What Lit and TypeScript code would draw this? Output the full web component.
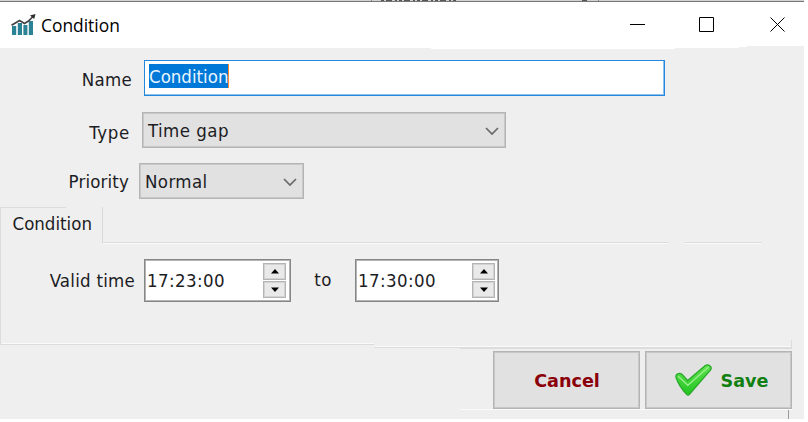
import { LitElement, html, css, svg } from "lit";
import { customElement, property } from "lit/decorators.js";

@customElement("drop-down")
class DropDown extends LitElement {
  @property() value = "";
  static styles = css`
    :host { display: flex; box-sizing: border-box; align-items: center; justify-content: space-between;
      border: 1px solid #b4b4b4; box-shadow: inset 0 0 0 1px #c8c8c8; background: #e1e1e1; padding: 2px 5px 0; height: 36px; }
    svg { width: 16px; height: 10px; display: block; }
  `;
  render() {
    return html`<span>${this.value}</span>
      <svg viewBox="0 0 16 10"><path d="M2 2l6 6 6-6" fill="none" stroke="#6a6a6a" stroke-width="1.7"/></svg>`;
  }
}

@customElement("time-spinner")
class TimeSpinner extends LitElement {
  @property() value = "";
  static styles = css`
    :host { display: flex; box-sizing: border-box; align-items: center; justify-content: space-between;
      border: 1px solid #858785; box-shadow: inset 0 0 0 1px #b4b4b4; background: #fff; padding: 0 4px 0 2px; height: 43px; letter-spacing: .4px; }
    .buttons { display: flex; flex-direction: column; gap: 1px; }
    .step { box-sizing: border-box; width: 23px; height: 17px; border: 1.5px solid #b4b4b4; background: #e9e9e9;
      box-shadow: inset 0 0 0 1px #d2d2d2; display: flex; align-items: center; justify-content: center; }
    svg { width: 8px; height: 5px; display: block; }
  `;
  render() {
    return html`<span>${this.value}</span>
      <div class="buttons">
        <div class="step"><svg viewBox="0 0 8 5"><path d="M0 4.5L4 0l4 4.5z"/></svg></div>
        <div class="step"><svg viewBox="0 0 8 5"><path d="M0 .5L4 5 8 .5z"/></svg></div>
      </div>`;
  }
}

const logo = svg`
  <g fill="#2a8294"><rect x="1" y="12" width="4.2" height="9"/><rect x="6.800" y="9" width="4.200" height="12"/>
  <rect x="12.400" y="11" width="4" height="10"/><rect x="17.800" y="7" width="4.200" height="14"/></g>
  <path d="M.5 11.300L3.500 9.500 8.500 6.500 13.500 9.500 17.500 7 22 2.500" fill="none" stroke="#454545" stroke-width="1.7"/>
  <path d="M19 1.500L24.500 0l-1.300 5z" fill="#2c2c2c"/>`;

@customElement("app-root")
class AppRoot extends LitElement {
  static styles = css`
    :host { display: block; width: 808px; height: 422px; background: #fff; overflow: hidden;
      font: 18.5px/22px "DejaVu Sans Condensed", "DejaVu Sans", sans-serif; font-stretch: condensed; color: #1c1c24; letter-spacing: .3px; }
    .window { width: 804px; height: 419px; display: flex; flex-direction: column; background: #efefef; position: relative; }
    .behind { height: 1px; background: #d2d2d2; border-bottom: 1px solid #777; flex: none; overflow: hidden; display: flex; }
    .fragments { width: 804px; height: 1px; display: block; }
    .title { height: 47px; margin-bottom: -1px; box-sizing: border-box; padding-bottom: 1px; background: #fff; display: flex; align-items: center; flex: none; color: #000;
      clip-path: polygon(0 0, 804px 0, 804px 44px, 747px 44px, 747px 45px, 739px 45px, 739px 46px, 675px 46px, 675px 47px, 431px 47px, 431px 46px, 0 46px); z-index: 1; }
    .logo { width: 25px; height: 22px; margin: 0 0 0 11px; }
    .title-text { font: 17.4px/24px "Open Sans", "Noto Sans", sans-serif; letter-spacing: 0; margin-left: 5px; flex: 1; font-stretch: normal; }
    .controls { width: 176px; height: 46px; display: block; }
    .row { display: flex; flex: none; }
    .label { text-align: right; flex: none; }
    .name-row { margin-top: 12px; height: 36px; }
    .name-row .label { width: 132px; margin: 9px 12px 0 0; }
    .input { box-sizing: border-box; width: 521px; height: 36px; border: 1px solid #2488dc; box-shadow: inset -1px -1px #8cc0ee; background: #fff; padding: 3px 4px; }
    .selected { display: inline-block; background: #0078d7; color: #eaf5ff; height: 24px; line-height: 25px; border-right: 1px solid #ff8728; letter-spacing: 0; }
    .type-row { margin-top: 16px; }
    .type-row .label { width: 130px; margin: 10px 12px 0 0; letter-spacing: .7px; }
    .type-row drop-down { width: 364px; letter-spacing: .45px; }
    .priority-row { margin-top: 15px; }
    .priority-row .label { width: 129px; margin: 8px 10px 0 0; letter-spacing: .15px; }
    .priority-row drop-down { width: 165px; letter-spacing: .4px; }
    .tabs { display: flex; height: 36px; margin-top: 8px; flex: none; }
    .tab { box-sizing: border-box; width: 103px; padding: 6px 0 0 11.5px; letter-spacing: 0; border-left: 1px solid #dcdcdc; border-right: 1px solid #d9d9d9;
      background: linear-gradient(#dcdcdc, #dcdcdc) 0 0 / 65px 1px no-repeat; }
    .rule { box-sizing: border-box; border-bottom: 1px solid #dcdcdc; width: 565px; margin-right: 17px; box-shadow: 0 1px #fafafa; }
    .rule.short { width: 77px; }
    .panel { display: flex; height: 102px; flex: none; box-sizing: border-box; border-left: 1px solid #dcdcdc; padding-top: 16px; }
    .panel .label { width: 134px; margin: 11px 9px 0 0; letter-spacing: .25px; }
    .panel .to { width: 64px; margin: 10px 0 0; text-align: center; }
    .start { width: 147px; }
    .end { width: 144px; padding-right: 3px; }
    .edges { position: absolute; left: 0; top: 339px; width: 804px; height: 80px; }
    .actions { display: flex; gap: 5px; margin: 6px 0 0 493px; position: relative; }
    .button { box-sizing: border-box; width: 147px; height: 58px; border: 1.5px solid #b4b4b4; box-shadow: inset 0 0 0 1px #c8c8c8; background: #e1e1e1;
      display: flex; align-items: center; justify-content: center; font: bold 17.6px/22px "DejaVu Sans", sans-serif; letter-spacing: 0; }
    .cancel { color: #8b0008; padding: 2px 0 0 1px; }
    .save { color: #118011; gap: 8px; padding: 2px 0 0 6px; }
    .check { width: 39px; height: 34px; margin: -2px 0 0 -1px; }
  `;
  render() {
    return html`<div class="window">
      <div class="behind"><svg class="fragments" viewBox="0 0 804 1" fill="none">
        <path d="M371 .5h1M598 .5h1" stroke="#888"/><path d="M381 .5h76" stroke="#555" stroke-dasharray="3 2 6 3 2 2"/><path d="M582 .5h5" stroke="#555"/>
      </svg></div>
      <div class="title">
        <svg class="logo" viewBox="0 0 25 22">${logo}</svg>
        <span class="title-text">Condition</span>
        <svg class="controls" viewBox="0 0 176 46" fill="none" stroke="#000">
          <path d="M2 22.5h15M71.5 15.5h14v14h-14zM142.500 15.500l14 14m0-14l-14 14"/>
        </svg>
      </div>
      <div class="row name-row"><span class="label">Name</span><div class="input"><span class="selected">Condition</span></div></div>
      <div class="row type-row"><span class="label">Type</span><drop-down value="Time gap"></drop-down></div>
      <div class="row priority-row"><span class="label">Priority</span><drop-down value="Normal"></drop-down></div>
      <div class="tabs"><div class="tab">Condition</div><div class="rule"></div><div class="rule short"></div></div>
      <div class="panel">
        <span class="label">Valid time</span><time-spinner class="start" value="17:23:00"></time-spinner>
        <span class="to">to</span><time-spinner class="end" value="17:30:00"></time-spinner>
      </div>
      <svg class="edges" viewBox="0 0 804 80" fill="none">
        <path d="M2 4.500H374M374 7.500H791M460 70.500H792" stroke="#fafafa"/>
        <path d="M0 5.500H374M374 8.500H792M460 9.500H792M791.500 1V9" stroke="#dcdcdc"/>
        <path d="M788.500 71V80" stroke="#999"/>
      </svg>
      <div class="actions">
        <div class="button cancel">Cancel</div>
        <div class="button save">
          <svg class="check" viewBox="0 0 39 34">
            <defs><linearGradient id="leaf" x1="0" y1="0" x2="0" y2="1"><stop offset="0" stop-color="#5fe34f"/><stop offset="1" stop-color="#22c322"/></linearGradient></defs>
            <path d="M2 14.500c-.8-3.300 3.400-5.500 6.200-3.100l5.400 6L31 2.800c3-2.500 7.700.8 5.600 4.200L15.500 31.300c-.9 1-2.100 1-2.900 0C8 26.500 4 20.500 2 14.500z" fill="url(#leaf)" stroke="#27a827" stroke-width="1.200"/>
            <path d="M4.500 13.500l9.300 8.700L34 4.500" fill="none" stroke="#9aee8a" stroke-width="1.500" stroke-linecap="round"/>
          </svg>
          Save</div>
      </div>
    </div>`;
  }
}
